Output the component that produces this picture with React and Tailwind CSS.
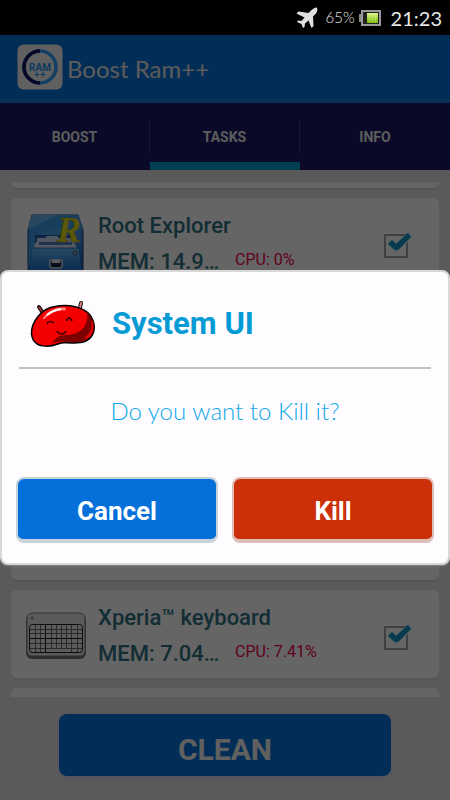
import React, { useState } from 'react';

const tabs = ['BOOST', 'TASKS', 'INFO'];

const initialTasks = [
    { id: 1 },
    { id: 2, name: 'Root Explorer', mem: 'MEM: 14.9…', cpu: 'CPU: 0%', icon: 'explorer' },
    { id: 3 },
    { id: 4 },
    { id: 5, icon: 'keyboard' },
    { id: 6, name: 'Xperia™ keyboard', mem: 'MEM: 7.04…', cpu: 'CPU: 7.41%', icon: 'keyboard' },
    { id: 7 },
];

const PlaneIcon = () => (
    <svg width="22" height="22" viewBox="0 0 22 22" aria-hidden="true">
        <path d="M21 .5c-2.500 0-4.500 1.500-6 3L12.500 6 2.500 4.500.5 6.500l8 4L5.500 14 2 13.500 1 15l4.500 2L7 21l1.500-1 .5-3.500 3.500-3 3 7.500 2-2-.5-9.500L19.500 7C21.300 5 21.800 3 21 .5z" fill="#e0e0e0" />
    </svg>
);

const BatteryIcon = () => (
    <svg width="22" height="16" viewBox="0 0 22 16" aria-hidden="true">
        <defs>
            <linearGradient id="charge" x1="0" y1="0" x2="0" y2="1">
                <stop offset="0" stopColor="#d8f58c" />
                <stop offset="1" stopColor="#79b800" />
            </linearGradient>
        </defs>
        <rect x="0" y="4" width="3" height="8" fill="#8a8a8a" />
        <rect x="3" y="1" width="18" height="14" fill="#222" stroke="#999" strokeWidth="2" />
        <rect x="8" y="3" width="11" height="10" fill="url(#charge)" />
        <path d="M10.500 3v10M13.500 3v10M16.500 3v10" stroke="#eaffb0" strokeWidth=".5" opacity=".6" />
    </svg>
);

const RamLogo = () => (
    <svg width="46" height="46" viewBox="0 0 46 46" aria-hidden="true">
        <rect x=".5" y=".5" width="45" height="45" rx="6" fill="#f0f0f0" />
        <circle cx="23" cy="23" r="16" fill="none" stroke="#35a0ff" strokeWidth="3.500" />
        <path d="M23 39a16 16 0 0 1 0-32" fill="none" stroke="#101060" strokeWidth="3.500" />
        <text x="23" y="27" textAnchor="middle" fontFamily="Roboto, sans-serif" fontWeight="700" fontSize="10" fill="#1e8eec">RAM</text>
        <path d="M17.500 30.500h5M20 28v5M23.500 30.500h5M26 28v5" stroke="#1e8eec" strokeWidth="1" />
    </svg>
);

const ExplorerIcon = () => (
    <svg width="60" height="60" viewBox="0 0 60 60" aria-hidden="true">
        <defs>
            <linearGradient id="cabinet" x1="0" y1="0" x2="1" y2="1">
                <stop offset="0" stopColor="#2a8ce0" />
                <stop offset=".5" stopColor="#4dabea" />
                <stop offset="1" stopColor="#1450b0" />
            </linearGradient>
            <linearGradient id="drawer" x1="0" y1="0" x2="0" y2="1">
                <stop offset="0" stopColor="#64b8f0" />
                <stop offset="1" stopColor="#1a6cd0" />
            </linearGradient>
        </defs>
        <path d="M6 1h46l5 15v42H2V16z" fill="url(#cabinet)" stroke="#113a80" />
        <path d="M6 1h46l5 14H2z" fill="#3a9ce4" />
        <path d="M6 1h26L2 15z" fill="#7cc4f0" opacity=".6" />
        <path d="M9 21h40v14H9z" fill="#2058b0" />
        <path d="M11 24h8l2-2h10l2 2h15v9H11z" fill="#c8d4f4" />
        <path d="M10 28h38l3 7H7z" fill="#d4dcf8" />
        <path d="M13 28h33v3H13z" fill="#4a80c8" />
        <path d="M6 34h47l3 22H3z" fill="url(#drawer)" stroke="#1d4c9c" strokeWidth=".7" />
        <circle cx="49" cy="39" r="2" fill="#aab4c4" stroke="#38456a" />
        <rect x="24" y="46" width="12" height="8" rx="2" fill="#112348" stroke="#d3dce8" strokeWidth="1.500" />
        <rect x="26" y="46" width="8" height="3" fill="#e8edf5" />
        <text x="31" y="28" fontFamily="Liberation Serif, serif" fontWeight="700" fontStyle="italic" fontSize="36" fill="#e6dc18" stroke="#a89c10" strokeWidth=".7">R</text>
    </svg>
);

const KeyboardIcon = () => (
    <svg width="62" height="48" viewBox="0 0 62 48" aria-hidden="true">
        <rect x="1" y="2" width="60" height="45" rx="6" fill="#777" />
        <rect x="2" y="1" width="58" height="43" rx="5" fill="#e0e0e0" stroke="#808080" />
        <circle cx="7" cy="6" r="1.500" fill="#7ea048" />
        <rect x="4.500" y="12.500" width="53" height="28" rx="3" fill="#e6e6e6" stroke="#222" />
        <path d="M5 17.500h52M5 21.500h52M5 31.500h52M5 36.500h52M10.500 13v27M15.500 13v27M26.500 13v23M31.500 13v23M36.500 13v23M41.500 13v23M46.500 13v27M52.500 13v27" stroke="#666" fill="none" />
        <path d="M5 26.500h52M20.500 13v27" stroke="#222" fill="none" />
    </svg>
);

// red jelly bean with two antennae
const BeanIcon = () => (
    <svg width="66" height="50" viewBox="0 0 66 50" aria-hidden="true">
        <path d="M9 8l4 6M51 4l-2 9" stroke="#111" strokeWidth="4" strokeLinecap="round" />
        <path d="M9 8l4 6" stroke="#a03030" strokeWidth="1.500" strokeLinecap="round" />
        <path d="M51 4l-2 9" stroke="#e08080" strokeWidth="2" strokeLinecap="round" />
        <path d="M1.500 35C1 23 12 9 25 7.500 39 5 53 8 60 16c5 7 6 16 1 22-5 6-12 6-20 6-6 0-9-1-13 1-8 3-18 3-22-1-3-2-4-5-4.500-9z" fill="#f40000" stroke="#000" strokeWidth="1.500" />
        <path d="M57 13c8 8 7 19 2 25-4 5-10 5-19 5-6 0-9-1-13 0-2 0-3 1-5 1 4-6 8-8 15-8 14-1 22-9 20-23z" fill="#7c0000" />
        <path d="M62 22c2 7-1 14-7 17" stroke="#e00000" strokeWidth="2" fill="none" />
        <path d="M13 19C18 12 25 8 35 8.500c2 1 1 3-1 3-8 0-13 2-19 8-1 1-3 1-2-.5z" fill="#ff8080" />
        <path d="M17 16c5-4 8-5 14-6" stroke="#fff" strokeWidth="2" fill="none" />
        <path d="M17 25c1-3 4-3 7-1M37 22c0-4 4-4 5 0M27 32c2 4 7 4 9 0" stroke="#300" strokeWidth="1.500" fill="none" />
    </svg>
);

const TaskCheckbox = ({ label, checked, onChange }) => (
    <label className="relative block w-6 h-6">
        <input
            type="checkbox"
            aria-label={label}
            checked={checked}
            onChange={onChange}
            className="block appearance-none w-6 h-6 border-2 border-[#a0a0a0] bg-transparent"
        />
        {checked && (
            <svg className="absolute -top-1 left-0 pointer-events-none" width="30" height="26" viewBox="0 0 30 26" aria-hidden="true">
                <path d="M20 5h4v7l-4 3z" fill="#fcfcfc" />
                <path d="M4 14l4-4 4 4L24 3l3 4-13 13h-3z" fill="#1593c0" stroke="#3fb4d8" strokeWidth=".8" />
            </svg>
        )}
    </label>
);

const TaskCard = ({ task, checked, onToggle }) => (
    <li className="h-[88px] shrink-0 rounded-md bg-[#fcfcfc] shadow-[0_2px_2px_#d4d4d4] flex pl-[14px] pr-[31px]">
        <div className="w-[62px] flex items-center justify-center pt-1">
            {task.icon === 'explorer' && <ExplorerIcon />}
            {task.icon === 'keyboard' && <KeyboardIcon />}
        </div>
        {task.name && (
            <>
                <div className="flex-1 min-w-0 pl-[11px] pt-3 text-[#2f7180] font-medium text-[22px]">
                    <h2 className="leading-8">{task.name}</h2>
                    <div className="flex items-center pt-1">
                        <span className="w-[137px] leading-8">{task.mem}</span>
                        <span className="text-[#f00048] text-[16px] leading-6 font-normal pb-1">{task.cpu}</span>
                    </div>
                </div>
                <div className="flex items-center pt-2">
                    <TaskCheckbox label={task.name} checked={checked} onChange={onToggle} />
                </div>
            </>
        )}
    </li>
);

const KillDialog = ({ onClose }) => (
    <div role="dialog" aria-labelledby="dialog-title" className="w-full rounded-lg border-2 border-[#d8d8d8] bg-[#fefcff] px-[14px] pb-5 shadow-[0_1px_2px_#888888]">
        <div className="mx-[3px] pl-[11px] h-[97px] flex items-center gap-4 border-b-2 border-[#c0c0c0] pt-2">
            <BeanIcon />
            <h1 id="dialog-title" className="text-[31px] leading-9 font-bold text-[#069bd4]">System UI</h1>
        </div>
        <p className="pt-6 pb-12 text-center font-['Lato',sans-serif] font-light text-[24px] leading-9 text-[#10a8e8]">Do you want to Kill it?</p>
        <div className="flex gap-[14px]">
            <button type="button" onClick={onClose} className="flex-1 h-[66px] rounded-lg border-2 border-b-4 border-[#c8d2da] bg-[#0570da] pt-1 text-white text-[26px] font-bold">Cancel</button>
            <button type="button" onClick={onClose} className="flex-1 h-[66px] rounded-lg border-2 border-b-4 border-[#dfbeb7] bg-[#cb3009] pt-1 text-white text-[26px] font-bold">Kill</button>
        </div>
    </div>
);

const App = () => {
    const [open, setOpen] = useState(true);
    const [activeTab, setActiveTab] = useState('TASKS');
    const [selected, setSelected] = useState([2, 6]);

    const toggleTask = (id) => {
        setSelected(prev => prev.includes(id) ? prev.filter(item => item !== id) : [...prev, id]);
    };

    return (
        <div className="h-screen flex flex-col bg-black font-['Roboto',sans-serif]">
            {/* Status bar */}
            <div className="h-[35px] shrink-0 flex items-center justify-end pr-2 font-['Lato',sans-serif] text-[#e6e6e6]">
                <PlaneIcon />
                <span className="ml-2 mr-1 text-[15px] font-light">65%</span>
                <BatteryIcon />
                <span className="ml-[10px] text-[20px]">21:23</span>
            </div>

            <div className="relative flex-1 min-h-0 flex flex-col bg-[#e1e1e1]">
                <header className="h-[68px] shrink-0 flex items-center gap-1 pl-[17px] bg-[#0570d7] border-b-4 border-[#1478d4]">
                    <RamLogo />
                    <span className="pt-1 font-['Lato',sans-serif] text-[24px] text-[#e6e6e6]">Boost Ram++</span>
                </header>

                <nav className="h-[67px] shrink-0 flex bg-[#191964]">
                    {tabs.map(tab => (
                        <button
                            key={tab}
                            type="button"
                            onClick={() => setActiveTab(tab)}
                            className={`flex-1 flex flex-col text-[14px] font-bold text-[#e6e6e6] border-b-8 ${activeTab === tab ? 'border-[#009ecc]' : 'border-[#191964]'}`}
                        >
                            <span className={`w-full h-[34px] mt-[17px] flex items-center justify-center ${tab === 'INFO' ? '' : 'border-r border-[#38387a]'}`}>{tab}</span>
                        </button>
                    ))}
                </nav>

                <main className="flex-1 min-h-0 mt-3 mx-[11px] overflow-hidden">
                    <ul className="-mt-[82px] flex flex-col gap-[10px]">
                        {initialTasks.map(task => (
                            <TaskCard
                                key={task.id}
                                task={task}
                                checked={selected.includes(task.id)}
                                onToggle={() => toggleTask(task.id)}
                            />
                        ))}
                    </ul>
                </main>

                <footer className="shrink-0 px-[59px] pt-[17px] pb-6">
                    <button type="button" onClick={() => setOpen(true)} className="w-full h-[62px] rounded-lg bg-[#0570d7] shadow-[0_1px_0_2px_#d4dae6] pt-2 text-[#f0f0f0] text-[30px] font-bold">CLEAN</button>
                </footer>

                {open && (
                    <div className="absolute inset-0 flex items-center bg-black/60">
                        <KillDialog onClose={() => setOpen(false)} />
                    </div>
                )}
            </div>
        </div>
    );
};

export default App;
